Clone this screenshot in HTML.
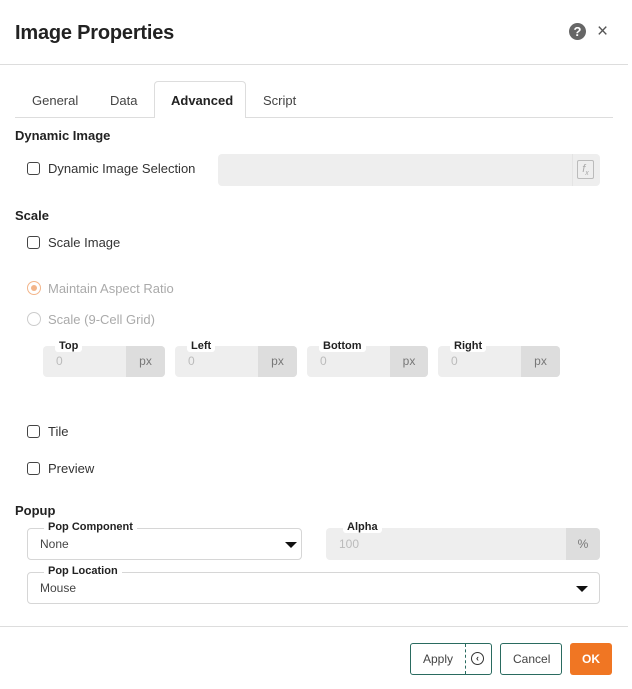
<!DOCTYPE html>
<html><head><meta charset="utf-8"><style>
*{box-sizing:border-box;margin:0;padding:0}
body{width:632px;height:689px;background:#fff;font-family:"Liberation Sans",sans-serif;color:#333;position:relative;overflow:hidden;font-size:13px}
.a{position:absolute}
.t{position:absolute;white-space:nowrap;line-height:1}
.cb{position:absolute;width:13px;height:13px;border:1.5px solid #444;border-radius:3px;background:#fff}
.rd{position:absolute;width:14px;height:14px;border:1px solid #ccc;border-radius:50%}
.fld{position:absolute;height:31px;background:#eee;border-radius:4px}
.px{position:absolute;right:0;top:0;bottom:0;background:#ddd;border-radius:0 4px 4px 0;color:#777;font-size:12px;text-align:center;line-height:31px}
.lb{position:absolute;background:#fff;font-size:11px;font-weight:bold;color:#222;padding:0 4px;border-radius:3px;line-height:12px}
.sel{position:absolute;height:32px;border:1px solid #d6d6d6;border-radius:4px;background:#fff}
.tri{position:absolute;width:0;height:0;border-left:6px solid transparent;border-right:6px solid transparent;border-top:6px solid #111}
</style></head><body>
<div class="t" style="left:15px;top:23px;font-size:20px;font-weight:bold;color:#222;letter-spacing:-0.2px">Image Properties</div>
<div class="a" style="left:569px;top:23px;width:17px;height:17px;border-radius:50%;background:#666;color:#fff;font-size:13px;font-weight:bold;text-align:center;line-height:17px">?</div>
<div class="t" style="left:597px;top:22px;font-size:19px;color:#555">×</div>
<div class="a" style="left:0;top:64px;width:628px;height:1px;background:#ddd"></div>

<div class="a" style="left:154px;top:81px;width:92px;height:37px;border:1px solid #ddd;border-bottom:none;border-radius:4px 4px 0 0;background:#fff;z-index:2"></div>
<div class="a" style="left:15px;top:117px;width:598px;height:1px;background:#ddd"></div>
<div class="t" style="left:32px;top:94px;color:#444">General</div>
<div class="t" style="left:110px;top:94px;color:#444">Data</div>
<div class="t" style="left:171px;top:94px;font-weight:bold;color:#222;z-index:3">Advanced</div>
<div class="t" style="left:263px;top:94px;color:#444">Script</div>

<div class="t" style="left:15px;top:129px;font-weight:bold;color:#222">Dynamic Image</div>
<div class="cb" style="left:27px;top:162px"></div>
<div class="t" style="left:48px;top:162px">Dynamic Image Selection</div>
<div class="fld" style="left:218px;top:154px;width:382px;height:32px"><div class="a" style="left:354px;top:0;width:1px;height:32px;background:#e4e4e4"></div>
<div class="a" style="left:359px;top:6px;width:17px;height:19px;border:1px solid #bbb;border-radius:2px;color:#aaa;font-size:11px;font-style:italic;text-align:center;line-height:17px">f<sub style="font-size:7px">x</sub></div></div>

<div class="t" style="left:15px;top:209px;font-weight:bold;color:#222">Scale</div>
<div class="cb" style="left:27px;top:236px"></div>
<div class="t" style="left:48px;top:236px">Scale Image</div>

<div class="rd" style="left:27px;top:281px;border:1px solid #f3b58a"><div class="a" style="left:3px;top:3px;width:6px;height:6px;border-radius:50%;background:#f3b58a"></div></div>
<div class="t" style="left:48px;top:282px;color:#aaa">Maintain Aspect Ratio</div>
<div class="rd" style="left:27px;top:312px"></div>
<div class="t" style="left:48px;top:313px;color:#aaa">Scale (9-Cell Grid)</div>

<div class="fld" style="left:43px;top:346px;width:122px"><div class="px" style="width:39px">px</div><div class="t" style="left:13px;top:9px;color:#bbb;font-size:12px">0</div></div>
<div class="lb" style="left:55px;top:340px">Top</div>
<div class="fld" style="left:175px;top:346px;width:122px"><div class="px" style="width:39px">px</div><div class="t" style="left:13px;top:9px;color:#bbb;font-size:12px">0</div></div>
<div class="lb" style="left:187px;top:340px">Left</div>
<div class="fld" style="left:307px;top:346px;width:121px"><div class="px" style="width:38px">px</div><div class="t" style="left:13px;top:9px;color:#bbb;font-size:12px">0</div></div>
<div class="lb" style="left:319px;top:340px">Bottom</div>
<div class="fld" style="left:438px;top:346px;width:122px"><div class="px" style="width:39px">px</div><div class="t" style="left:13px;top:9px;color:#bbb;font-size:12px">0</div></div>
<div class="lb" style="left:450px;top:340px">Right</div>

<div class="cb" style="left:27px;top:425px"></div>
<div class="t" style="left:48px;top:425px">Tile</div>
<div class="cb" style="left:27px;top:462px"></div>
<div class="t" style="left:48px;top:462px">Preview</div>

<div class="t" style="left:15px;top:504px;font-weight:bold;color:#222">Popup</div>
<div class="sel" style="left:27px;top:528px;width:275px"><div class="t" style="left:12px;top:9px;font-size:12px;color:#444">None</div><div class="tri" style="right:2px;top:13px;left:257px"></div></div>
<div class="lb" style="left:44px;top:521px">Pop Component</div>
<div class="fld" style="left:326px;top:528px;width:274px;height:32px"><div class="px" style="width:34px;line-height:32px">%</div><div class="t" style="left:13px;top:10px;color:#bbb;font-size:12px">100</div></div>
<div class="lb" style="left:343px;top:521px">Alpha</div>
<div class="sel" style="left:27px;top:572px;width:573px"><div class="t" style="left:12px;top:9px;font-size:12px;color:#444">Mouse</div><div class="tri" style="left:548px;top:13px"></div></div>
<div class="lb" style="left:44px;top:565px">Pop Location</div>

<div class="a" style="left:0;top:626px;width:628px;height:1px;background:#ddd"></div>
<div class="a" style="left:410px;top:643px;width:82px;height:32px;border:1px solid #2a6b60;border-radius:3px"><div class="t" style="left:12px;top:9px;font-size:12px;color:#444">Apply</div><div class="a" style="left:54px;top:0;height:30px;border-left:1px dashed #2a6b60"></div><div class="a" style="left:60px;top:8px;width:13px;height:13px;border:1.5px solid #333;border-radius:50%;font-size:9px;text-align:center;line-height:10px;font-weight:bold">‹</div></div>
<div class="a" style="left:500px;top:643px;width:62px;height:32px;border:1px solid #2a6b60;border-radius:3px"><div class="t" style="left:12px;top:9px;font-size:12px;color:#444">Cancel</div></div>
<div class="a" style="left:570px;top:643px;width:42px;height:32px;background:#f07623;border-radius:3px;color:#fff;font-size:12px;font-weight:bold;text-align:center;line-height:32px">OK</div>
</body></html>
